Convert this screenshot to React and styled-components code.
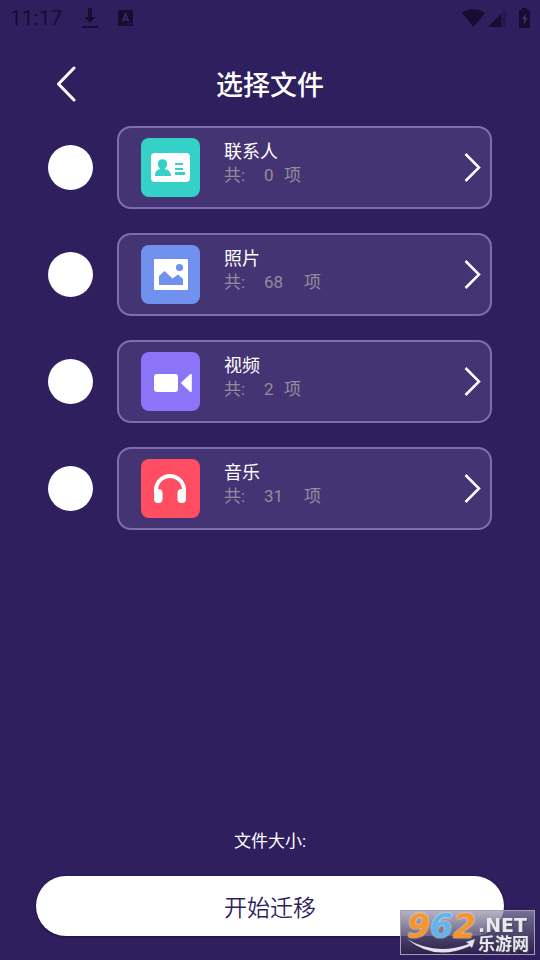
import React, { useState } from 'react';
import styled, { createGlobalStyle } from 'styled-components';

const GlobalStyle = createGlobalStyle`
    * {
        box-sizing: border-box;
    }

    body {
        margin: 0;
        background-color: #2f1f5e;
        font-family: Roboto, "Noto Sans CJK SC", sans-serif;
        color: white;
    }

    button {
        font-family: inherit;
        cursor: pointer;
    }
`;

const StyledPage = styled.div`
    display: flex;
    flex-direction: column;
    min-height: 100vh;
    padding-bottom: 24px;
`;

const StyledStatusBar = styled.div`
    display: flex;
    align-items: center;
    justify-content: space-between;
    height: 36px;
    padding: 0 10px;
    color: #170d33;
`;

const StyledStatusGroup = styled.div`
    display: flex;
    align-items: center;
    gap: ${props => props.$gap};
`;

const StyledTime = styled.span`
    font-size: 21px;
    line-height: 24px;
`;

const StyledHeader = styled.header`
    display: grid;
    grid-template-columns: 40px 1fr 40px;
    align-items: center;
    height: 90px;
    padding: 8px 46px 0;
`;

const StyledBackBtn = styled.button`
    display: flex;
    align-items: center;
    justify-content: center;
    height: 40px;
    padding: 0;
    border: none;
    background: none;
    color: white;
`;

const StyledTitle = styled.h1`
    margin: 0;
    padding-top: 2px;
    font-size: 27px;
    font-weight: 500;
    line-height: 40px;
    text-align: center;
`;

const StyledList = styled.ul`
    display: flex;
    flex-direction: column;
    gap: 24px;
    margin: 0;
    padding: 0 48px;
    list-style: none;
`;

const StyledRow = styled.li`
    display: flex;
    align-items: center;
    gap: 24px;
`;

const StyledCheck = styled.input`
    appearance: none;
    flex: none;
    width: 45px;
    height: 45px;
    margin: 0;
    border-radius: 50%;
    background-color: white;
    cursor: pointer;

    &:checked {
        border: 12px solid white;
        background-color: #8c74f8;
    }
`;

const StyledCard = styled.button`
    display: flex;
    flex: 1;
    align-items: flex-start;
    gap: 24px;
    height: 83px;
    padding: 10px 9px 10px 22px;
    border: 2px solid #806cb5;
    border-radius: 14px;
    background-color: #453473;
    color: white;
    text-align: left;
`;

const StyledTile = styled.span`
    flex: none;
    width: 59px;
    height: 59px;
    border-radius: 8px;
    background-color: ${props => props.$color};

    & > svg {
        display: block;
    }
`;

const StyledInfo = styled.span`
    flex: 1;
`;

const StyledName = styled.span`
    display: block;
    padding-top: 2px;
    font-size: 18px;
    line-height: 24px;
`;

const StyledCount = styled.span`
    display: flex;
    font-size: 17px;
    line-height: 22px;
    color: #938c9c;
`;

const StyledCountLabel = styled.span`
    width: 40px;
`;

// 자릿수만큼 숫자 칸이 넓어진다
const StyledCountNumber = styled.span`
    width: ${props => props.$digits * 20}px;
`;

const StyledArrow = styled.svg`
    flex: none;
    align-self: center;
`;

const StyledFooter = styled.footer`
    display: flex;
    flex-direction: column;
    gap: 22px;
    margin-top: auto;
    padding: 0 36px;
`;

const StyledSize = styled.p`
    margin: 0;
    font-size: 17px;
    line-height: 26px;
    text-align: center;
`;

const StyledStartBtn = styled.button`
    height: 60px;
    border: none;
    border-radius: 30px;
    background-color: white;
    box-shadow: 0 1px 3px rgba(0, 0, 0, 0.4);
    font-size: 23px;
    font-weight: 350;
    color: #2f1f5e;
`;

const StyledBadge = styled.div`
    position: fixed;
    right: 5px;
    bottom: 5px;
    display: grid;
    grid-template-columns: 77px 1fr;
    width: 135px;
    height: 45px;
    border: 1px solid #a49fb4;
    background: linear-gradient(rgba(150, 145, 172, 0.7), rgba(44, 34, 76, 0.95));
    pointer-events: none;
`;

const StyledBadgeLogo = styled.div`
    padding-left: 6px;
    font-family: "DejaVu Sans", sans-serif;
    font-size: 33px;
    font-weight: bold;
    font-style: italic;
    line-height: 32px;
    white-space: nowrap;
`;

const StyledDigit = styled.span`
    color: ${props => props.$color};
    text-shadow: 0 0 2px white;
`;

const StyledBadgeText = styled.div`
    color: #e9e8ee;
    text-shadow: 1px 1px 1px #4b465c;
    white-space: nowrap;
`;

const StyledDomain = styled.div`
    padding-top: 4px;
    font-family: "DejaVu Sans", sans-serif;
    font-size: 19px;
    font-weight: bold;
    line-height: 20px;
`;

const StyledSiteName = styled.div`
    font-size: 17px;
    font-weight: bold;
    line-height: 18px;
`;

const StyledSwoosh = styled.svg`
    position: absolute;
    left: 6px;
    bottom: 0;
`;

const ContactIcon = () => (
    <svg width="59" height="59" viewBox="0 0 59 59">
        <rect x="10" y="15" width="39" height="29" rx="4" fill="white" />
        <g fill="#35d0c7">
            <circle cx="21.5" cy="26" r="4.8" />
            <path d="M19 28h5v3c3.500 1 6 2.500 6 7H14c0-4.500 2-6 5-7z" />
            <rect x="34" y="25" width="8" height="2" />
            <rect x="34" y="30" width="8" height="2" />
            <rect x="34" y="34" width="10" height="3" />
        </g>
    </svg>
);

const PhotoIcon = () => (
    <svg width="59" height="59" viewBox="0 0 59 59">
        <rect x="13" y="14" width="34" height="31" rx="1" fill="white" />
        <g fill="#7191ef">
            <circle cx="38.500" cy="22.500" r="3.600" />
            <path d="M18 40v-9l5.500-5 8 7.500 5.500-4 5 4.500v6z" />
        </g>
    </svg>
);

const VideoIcon = () => (
    <svg width="59" height="59" viewBox="0 0 59 59" fill="white">
        <rect x="13" y="22" width="24" height="18" rx="3" />
        <path d="M40.500 30.300l8.500-8c.8-.7 1.800-.4 1.800.7v16c0 1.100-1 1.400-1.800.7l-8.500-8q-.8-.7 0-1.400z" />
    </svg>
);

const MusicIcon = () => (
    <svg width="59" height="59" viewBox="0 0 59 59">
        <path d="M15 36v-5a14 14 0 0 1 28 0v5" fill="none" stroke="white" strokeWidth="4" />
        <rect x="13" y="30" width="8.500" height="14" rx="4" fill="white" />
        <rect x="36.500" y="30" width="8.500" height="14" rx="4" fill="white" />
    </svg>
);

const files = [
    { id: 'contact', name: '联系人', count: 0, color: '#35d0c7', Icon: ContactIcon },
    { id: 'photo', name: '照片', count: 68, color: '#7191ef', Icon: PhotoIcon },
    { id: 'video', name: '视频', count: 2, color: '#8c74f8', Icon: VideoIcon },
    { id: 'music', name: '音乐', count: 31, color: '#ff4d61', Icon: MusicIcon },
];

const StatusBar = () => (
    <StyledStatusBar>
        <StyledStatusGroup $gap="20px">
            <StyledTime>11:17</StyledTime>
            <svg width="16" height="22" viewBox="0 0 16 22" fill="currentColor">
                <path d="M6 1h4v9h4l-6 6-6-6h4z" />
                <rect y="19" width="16" height="2" />
            </svg>
            <svg width="15" height="16" viewBox="0 0 15 16">
                <rect width="15" height="16" rx="1.500" fill="currentColor" />
                <path d="M4.500 11.500L7.500 4l3 7.500M5.500 9.500h4" fill="none" stroke="#3b2d66" strokeWidth="1.500" />
                <path d="M8 14h1M10 14h1M12 14h1" stroke="#3b2d66" />
            </svg>
        </StyledStatusGroup>
        <StyledStatusGroup $gap="3px">
            <svg width="23" height="18" viewBox="0 0 23 18" fill="currentColor">
                <path d="M0 4Q11.500-4 23 4L11.500 18z" />
            </svg>
            <svg width="19" height="18" viewBox="0 0 19 18" fill="currentColor">
                <path d="M0 18L18 0v18z" opacity="0.35" />
                <path d="M0 18L13 5v13z" />
            </svg>
            <svg width="20" height="20" viewBox="0 0 20 20" fill="currentColor">
                <path d="M12 0h5v2h2q1 0 1 1v16q0 1-1 1h-9q-1 0-1-1V3q0-1 1-1h2z" />
                <path d="M16 5l-4 6h2.500l-1 6 4-7H15z" fill="#44366d" />
            </svg>
        </StyledStatusGroup>
    </StyledStatusBar>
);

const FileRow = ({ file, checked, onCheck }) => {
    const { name, count, color, Icon } = file;

    return (
        <StyledRow>
            <StyledCheck type="checkbox" aria-label={name} checked={checked} onChange={onCheck} />
            <StyledCard type="button">
                <StyledTile $color={color}><Icon /></StyledTile>
                <StyledInfo>
                    <StyledName>{name}</StyledName>
                    <StyledCount>
                        <StyledCountLabel>共:</StyledCountLabel>
                        <StyledCountNumber $digits={String(count).length}>{count}</StyledCountNumber>
                        <span>项</span>
                    </StyledCount>
                </StyledInfo>
                <StyledArrow width="17" height="30" viewBox="0 0 17 30" fill="none" stroke="white" strokeWidth="2.500">
                    <path d="M1.500 1L15 14.500 1.500 28" />
                </StyledArrow>
            </StyledCard>
        </StyledRow>
    );
};

const App = () => {
    const [selected, setSelected] = useState([]);

    const toggle = (id) => {
        setSelected(selected.includes(id) ? selected.filter(v => v !== id) : [...selected, id]);
    };

    return <React.Fragment>
        <GlobalStyle />
        <StyledPage>
            <StatusBar />

            <StyledHeader>
                <StyledBackBtn type="button" aria-label="返回">
                    <svg width="20" height="38" viewBox="0 0 20 38" fill="none" stroke="currentColor" strokeWidth="3" strokeLinecap="round" strokeLinejoin="round">
                        <path d="M18 2L2.500 18 18 34" />
                    </svg>
                </StyledBackBtn>
                <StyledTitle>选择文件</StyledTitle>
            </StyledHeader>

            <StyledList>
                {files.map(file => (
                    <FileRow
                        key={file.id}
                        file={file}
                        checked={selected.includes(file.id)}
                        onCheck={() => toggle(file.id)}
                    />
                ))}
            </StyledList>

            <StyledFooter>
                <StyledSize>文件大小:</StyledSize>
                <StyledStartBtn type="button">开始迁移</StyledStartBtn>
            </StyledFooter>
        </StyledPage>

        <StyledBadge>
            <StyledBadgeLogo>
                <StyledDigit $color="#f7942b">9</StyledDigit>
                <StyledDigit $color="#62b4ea">6</StyledDigit>
                <StyledDigit $color="#f7942b">2</StyledDigit>
            </StyledBadgeLogo>
            <StyledBadgeText>
                <StyledDomain>.NET</StyledDomain>
                <StyledSiteName>乐游网</StyledSiteName>
            </StyledBadgeText>
            <StyledSwoosh width="70" height="15" viewBox="0 0 70 15">
                <path d="M0 0Q28 17 62 5l-3-2 9-3-3 9-2-2Q28 23 0 0z" fill="#e4e2ea" />
            </StyledSwoosh>
        </StyledBadge>
    </React.Fragment>
}

export default App;
